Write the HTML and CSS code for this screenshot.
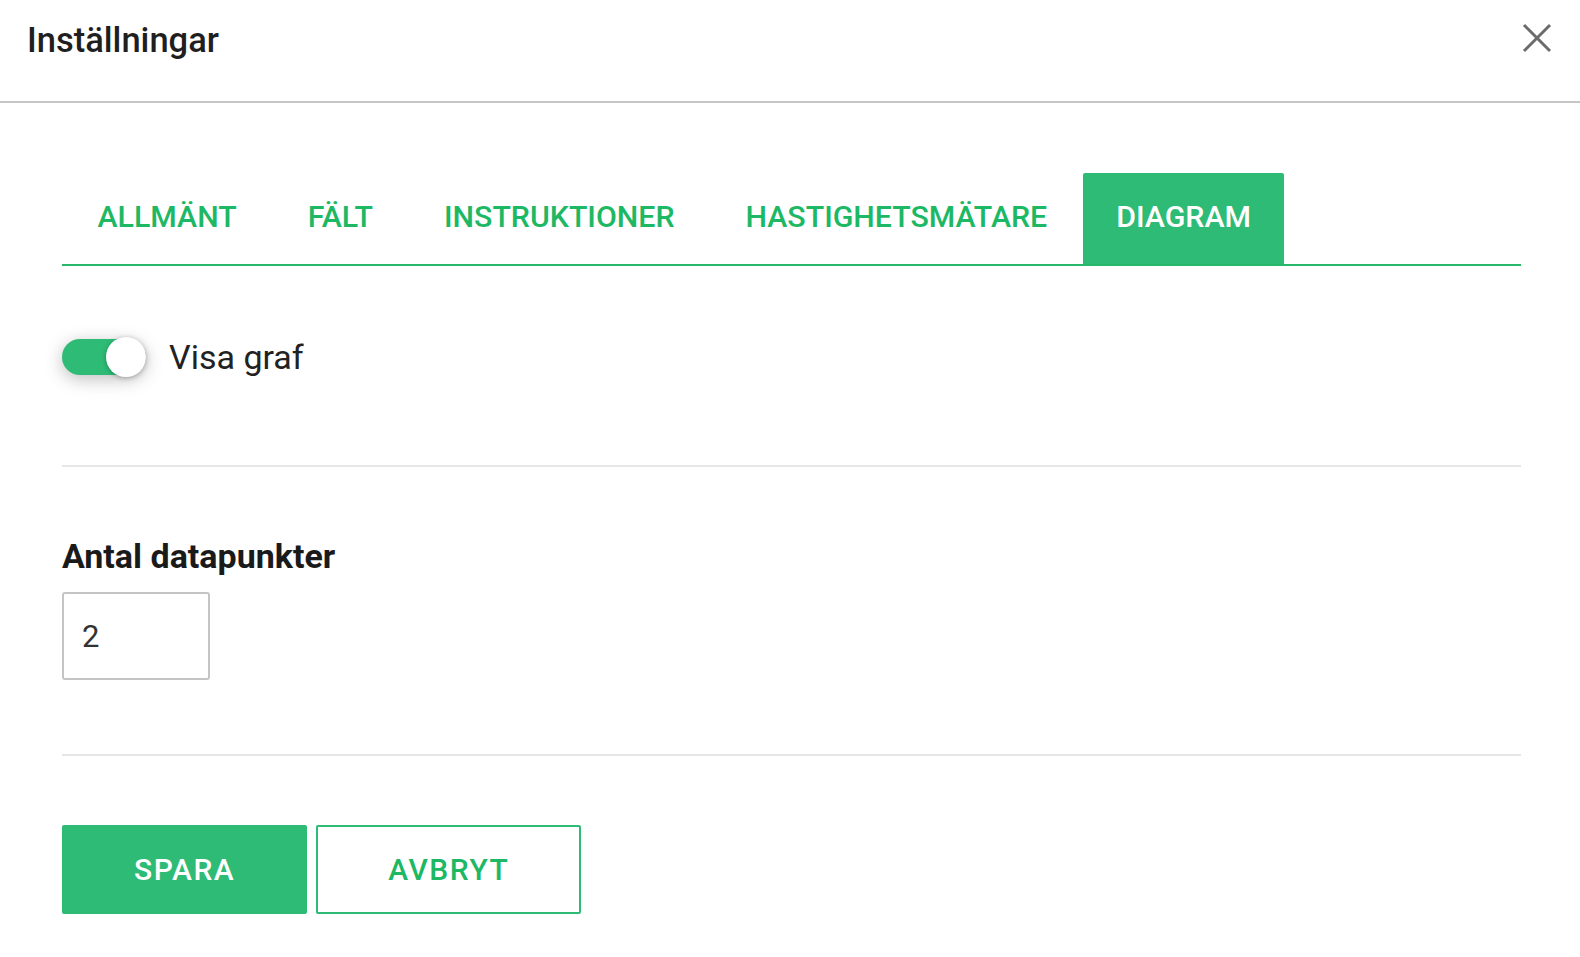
FILE: index.html
```html
<!DOCTYPE html>
<html>
<head>
    <meta charset="UTF-8">
    <title>Inställningar</title>
    <link rel="stylesheet" href="styles.css">
</head>
<body>
<div class="dialog">
    <div class="dialog-head">
        <h1 class="dialog-title">Inställningar</h1>
        <button class="close" type="button" aria-label="Stäng">
            <svg width="30" height="30" viewBox="0 0 30 30">
                <path d="M2 2 L28 28 M28 2 L2 28" stroke="#6b6b6b" stroke-width="3" fill="none"/>
            </svg>
        </button>
    </div>
    <div class="dialog-body">
        <ul class="tabs">
            <li>Allmänt</li>
            <li>Fält</li>
            <li>Instruktioner</li>
            <li>Hastighetsmätare</li>
            <li class="active">Diagram</li>
        </ul>

        <div class="toggle-row">
            <span class="switch"><span class="knob"></span></span>
            <span class="toggle-label">Visa graf</span>
        </div>

        <div class="divider"></div>

        <div class="field">
            <label class="field-label" for="points">Antal datapunkter</label>
            <input class="field-input" id="points" type="text" value="2">
        </div>

        <div class="divider"></div>

        <div class="actions">
            <button class="btn btn-primary" type="button">Spara</button>
            <button class="btn btn-outline" type="button">Avbryt</button>
        </div>
    </div>
</div>
</body>
</html>
```

FILE: styles.css
```css
html, body {
    margin: 0;
    padding: 0;
    background: #fff;
}

body {
    font-family: Roboto, "Liberation Sans", sans-serif;
    color: #222;
}

.dialog-head {
    height: 103px;
    box-sizing: border-box;
    padding: 21px 28px 0 27px;
    display: flex;
    justify-content: space-between;
    align-items: flex-start;
    border-bottom: 2px solid #c6c6c6;
}

.dialog-title {
    margin: 0;
    font-size: 34.5px;
    line-height: 38px;
    font-weight: 500;
    color: #1f1f1f;
}

.close {
    margin-top: 2px;
    padding: 0;
    border: none;
    background: none;
    width: 30px;
    height: 30px;
    cursor: pointer;
}

.close svg {
    display: block;
}

.dialog-body {
    padding: 0 59px 0 62px;
}

.tabs {
    margin: 70px 0 0;
    padding: 0;
    list-style: none;
    display: flex;
    border-bottom: 2px solid #27b86a;
}

.tabs li {
    height: 91px;
    line-height: 88px;
    padding: 0 35.5px;
    font-size: 30.3px;
    font-weight: 500;
    text-transform: uppercase;
    color: #1db864;
    border-radius: 2px 2px 0 0;
}

.tabs li.active {
    padding: 0 33.5px;
    background: #2dbb75;
    color: #fff;
}

.toggle-row {
    margin-top: 71px;
    height: 40px;
    display: flex;
    align-items: center;
}

.switch {
    position: relative;
    width: 84px;
    height: 36px;
    border-radius: 18px;
    background: #2dbb75;
    box-shadow: 0 4px 18px rgba(0, 0, 0, 0.26);
}

.knob {
    position: absolute;
    right: 0;
    top: -2px;
    width: 40px;
    height: 40px;
    border-radius: 50%;
    background: #fff;
    box-shadow: 0 1px 5px rgba(0, 0, 0, 0.28);
}

.toggle-label {
    margin-left: 23px;
    font-size: 34px;
    color: #222;
}

.divider {
    height: 2px;
    background: #e6e6e6;
    margin-top: 88px;
}

.field {
    margin-top: 70px;
}

.field-label {
    display: block;
    font-size: 34px;
    line-height: 38px;
    font-weight: 700;
    color: #1a1a1a;
}

.field-input {
    display: block;
    margin-top: 17px;
    width: 148px;
    height: 88px;
    box-sizing: border-box;
    padding: 0 18px;
    border: 2px solid #c4c4c4;
    border-radius: 3px;
    font-family: Roboto, "Liberation Sans", sans-serif;
    font-size: 31px;
    color: #333;
    outline: none;
}

.field + .divider {
    margin-top: 74px;
}

.actions {
    margin-top: 69px;
    display: flex;
    gap: 9px;
}

.btn {
    height: 89px;
    padding: 0 70px;
    border-radius: 2px;
    font-family: Roboto, "Liberation Sans", sans-serif;
    font-size: 30px;
    font-weight: 500;
    letter-spacing: 1.5px;
    text-transform: uppercase;
    cursor: pointer;
}

.btn-primary {
    background: #2dbb75;
    border: 2px solid #2dbb75;
    color: #fff;
}

.btn-outline {
    background: #fff;
    border: 2px solid #2dbb75;
    color: #1db864;
}
```
